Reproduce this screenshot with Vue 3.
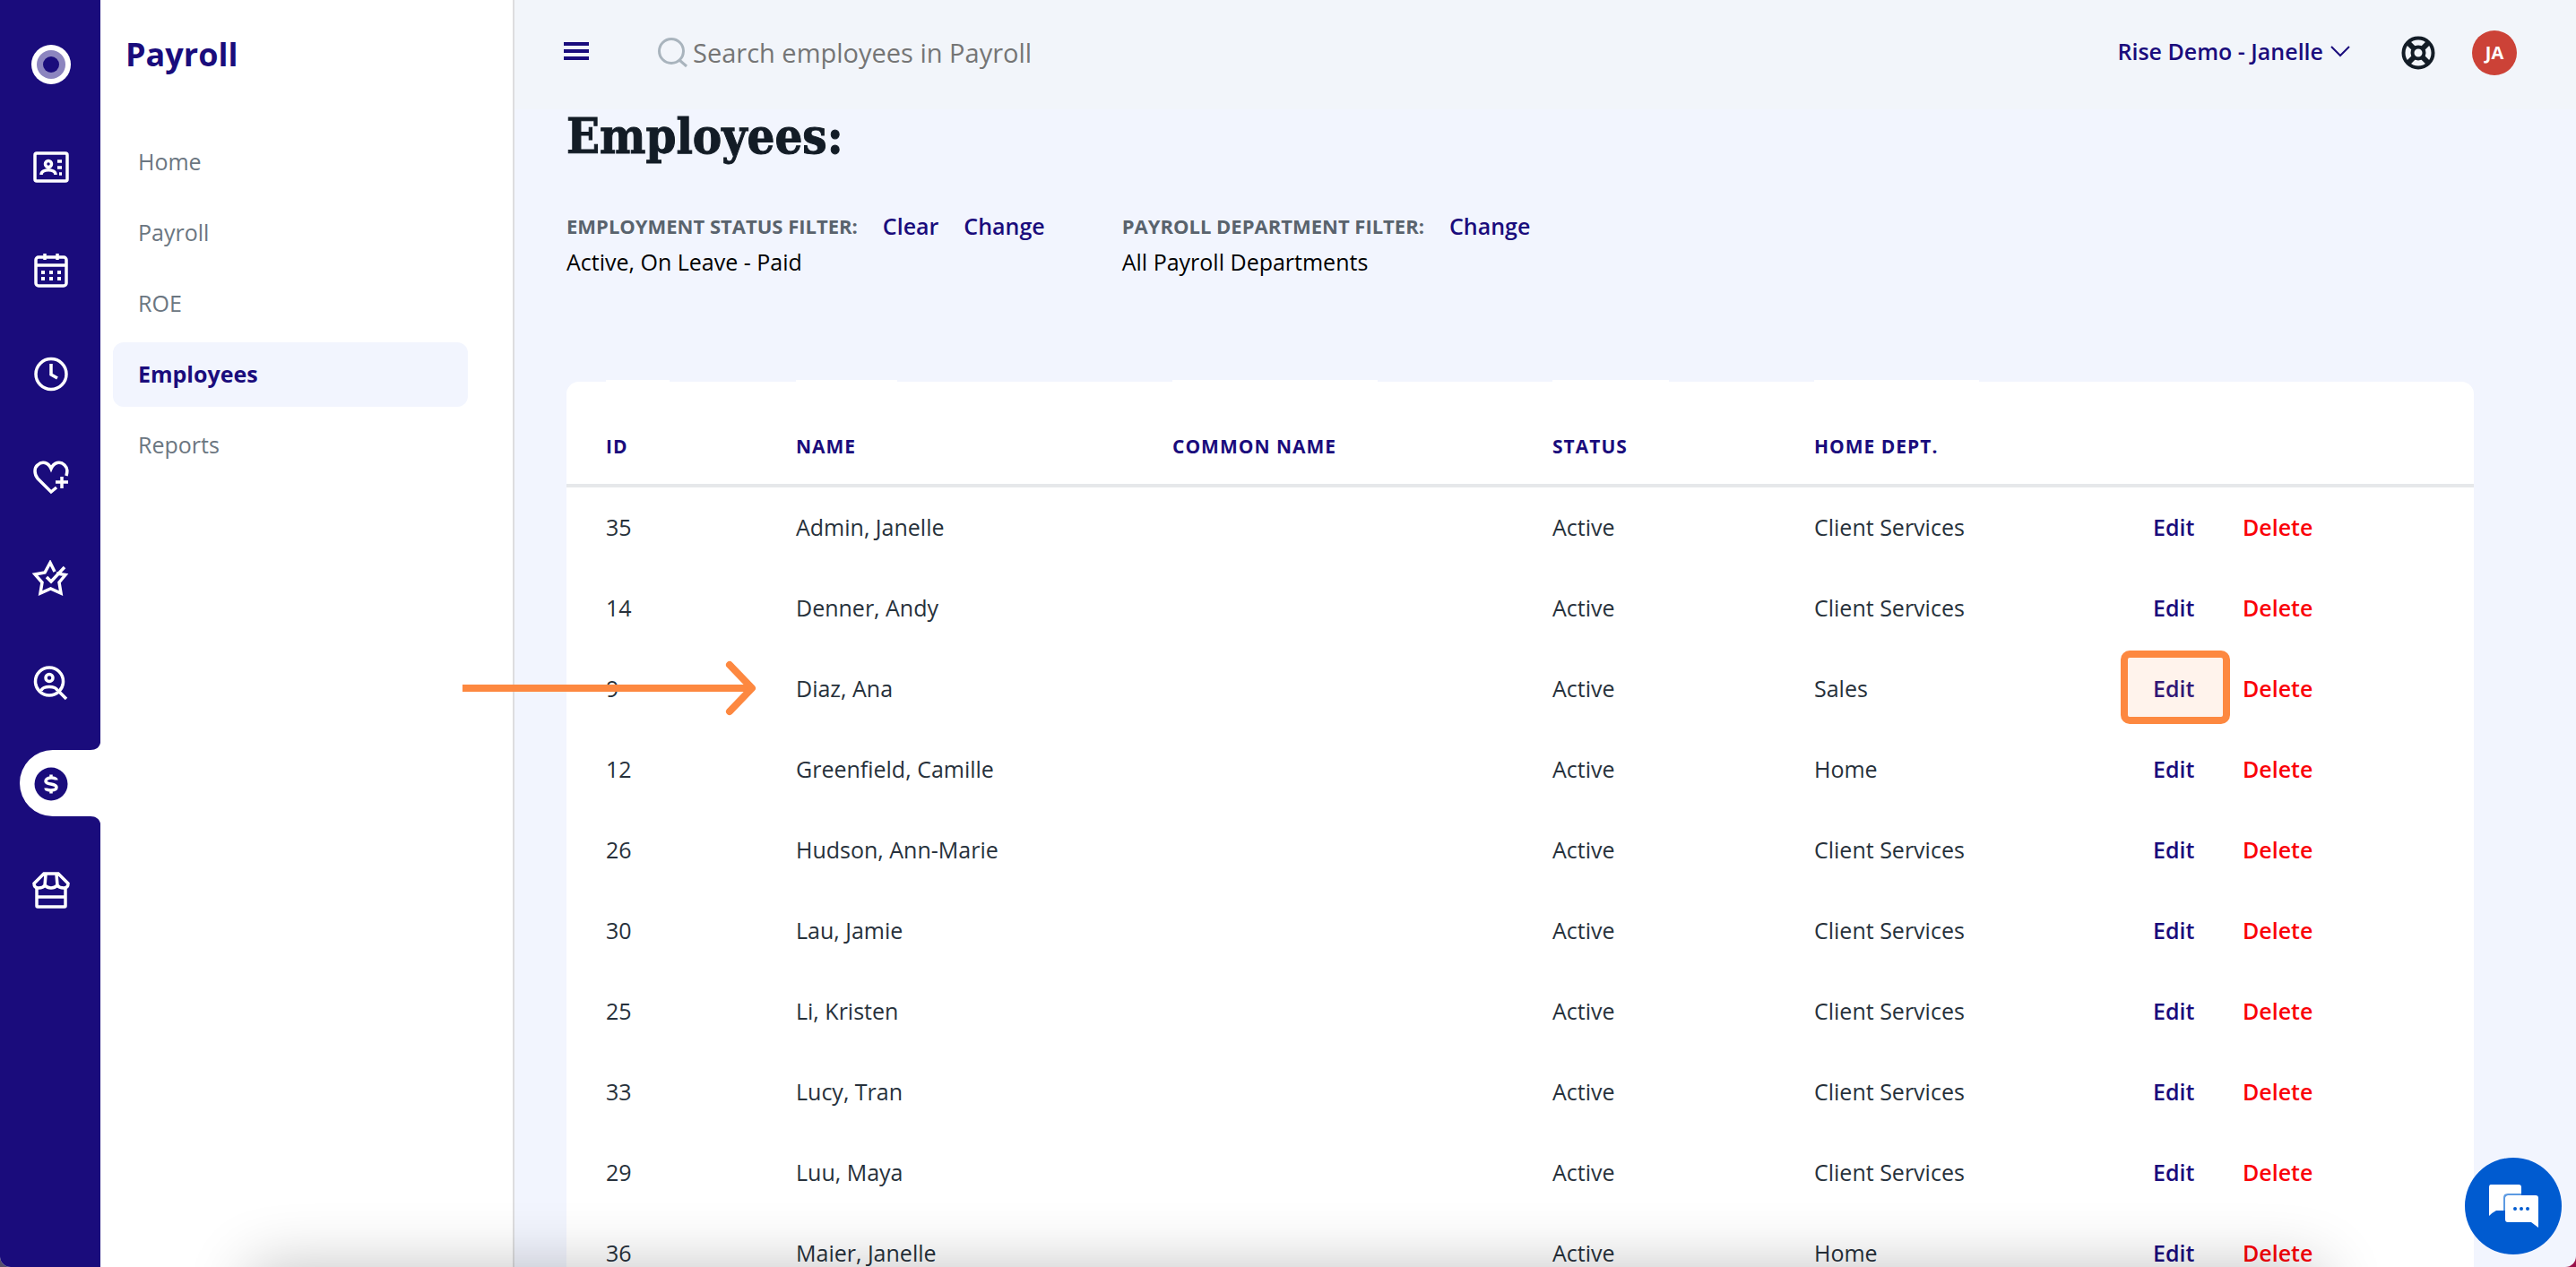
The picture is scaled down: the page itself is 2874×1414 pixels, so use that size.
<script setup>
import { ref } from 'vue'

const search = ref('')

const railItems = [
  { key: 'people', label: 'People' },
  { key: 'calendar', label: 'Calendar' },
  { key: 'time', label: 'Time' },
  { key: 'benefits', label: 'Benefits' },
  { key: 'performance', label: 'Performance' },
  { key: 'recruiting', label: 'Recruiting' },
  { key: 'payroll', label: 'Payroll', active: true },
  { key: 'store', label: 'Marketplace' },
]

const navItems = ['Home', 'Payroll', 'ROE', 'Employees', 'Reports']
const currentNav = 'Employees'

const columns = ['ID', 'Name', 'Common Name', 'Status', 'Home Dept.']

const employees = [
  { id: 35, name: 'Admin, Janelle', dept: 'Client Services' },
  { id: 14, name: 'Denner, Andy', dept: 'Client Services' },
  { id: 9, name: 'Diaz, Ana', dept: 'Sales', marked: true },
  { id: 12, name: 'Greenfield, Camille', dept: 'Home' },
  { id: 26, name: 'Hudson, Ann-Marie', dept: 'Client Services' },
  { id: 30, name: 'Lau, Jamie', dept: 'Client Services' },
  { id: 25, name: 'Li, Kristen', dept: 'Client Services' },
  { id: 33, name: 'Lucy, Tran', dept: 'Client Services' },
  { id: 29, name: 'Luu, Maya', dept: 'Client Services' },
  { id: 36, name: 'Maier, Janelle', dept: 'Home' },
]
</script>

<template>
  <div class="app">
    <nav class="rail" aria-label="Modules">
      <a class="brand" href="#" aria-label="Dashboard">
        <svg viewBox="0 0 44 44" width="44" height="44">
          <circle cx="22" cy="22" r="22" fill="#fff" />
          <circle cx="22" cy="22" r="16" fill="#8c85bf" />
          <circle cx="22" cy="22" r="9" fill="#1a0c7c" />
        </svg>
      </a>
      <a
        v-for="item in railItems"
        :key="item.key"
        class="rail-item"
        :class="{ active: item.active }"
        href="#"
        :aria-label="item.label"
      >
        <svg v-if="item.active" class="tab" viewBox="0 0 90 90" width="90" height="90">
          <path d="M90 0C89 5 85 8 79 8H37A37 37 0 0 0 37 82H79C85 82 89 85 90 90Z" fill="#fff" />
        </svg>
        <svg class="glyph" viewBox="0 0 44 44" width="44" height="44">
          <g v-if="item.key === 'people'">
            <rect x="4" y="6" width="36" height="31" rx="2" />
            <circle cx="19" cy="18" r="3.5" />
            <path d="M11 30C11 23 27 23 27 30M29 15h5M29 22h5M31 29h3" />
          </g>
          <g v-else-if="item.key === 'calendar'">
            <rect x="5" y="7" width="34" height="32" rx="3" />
            <path d="M5 16H39M15 3V10M29 3V10" />
            <path class="dots" d="M13 24h0M22 24h0M31 24h0M13 31h0M22 31h0M31 31h0" />
          </g>
          <g v-else-if="item.key === 'time'">
            <circle cx="22" cy="22.500" r="17" />
            <path d="M22 11V23L29 27" />
          </g>
          <g v-else-if="item.key === 'benefits'">
            <path d="M28 34L22 39L7 24C3 19 3 12 7 9C12 4 19 6 22 13C25 6 32 4 37 9C41 13 40 17 39 21" />
            <path d="M34 22V35M27 28H41" />
          </g>
          <g v-else-if="item.key === 'performance'">
            <path d="M28 15L38 16.500L31 25L33 37L21.500 32L10 37L12 25L4 16L15 14L21 3L26 13" />
            <path d="M17 19L22 24L37 8" />
          </g>
          <g v-else-if="item.key === 'recruiting'">
            <circle cx="20" cy="20.500" r="15.500" />
            <circle cx="20" cy="16.500" r="4" />
            <path d="M11 31C12 25 28 25 29 31M31 32L39 40" />
          </g>
          <g v-else-if="item.key === 'payroll'">
            <circle cx="22" cy="20" r="18.500" fill="#1a0c7c" stroke="none" />
            <path d="M28 15.500C28 12 16 12 16 17C16 21 28 19 28 23.500C28 28 16 28 16 24.500M22 9.500V13M22 27V30.500" />
          </g>
          <g v-else>
            <path d="M6 20V41Q6 42 7 42H37Q38 42 38 41V20M6 31H38" />
            <path d="M14 5H30L41 16Q41 21 36 21Q31 21 29 18Q26 21 22 21Q18 21 15 18Q13 21 8 21Q3 21 3 16ZM16 6L15 18M28 6L29 18" />
          </g>
        </svg>
      </a>
    </nav>

    <aside class="panel">
      <h2 class="panel-title">Payroll</h2>
      <nav class="panel-nav" aria-label="Payroll">
        <a
          v-for="item in navItems"
          :key="item"
          class="nav-link"
          :class="{ current: item === currentNav }"
          href="#"
          >{{ item }}</a
        >
      </nav>
    </aside>

    <div class="content">
      <header class="topbar">
        <button class="plain menu" type="button" aria-label="Toggle menu">
          <svg viewBox="0 0 28 22" width="28" height="22">
            <path d="M0 3H28M0 11H28M0 19H28" stroke="#1a0c7c" stroke-width="4" />
          </svg>
        </button>
        <label class="search">
          <svg viewBox="0 0 34 34" width="34" height="34" fill="none" stroke="#a9b4bd" stroke-width="3">
            <circle cx="16" cy="15" r="13.500" />
            <path d="M25 25L33 32" />
          </svg>
          <input v-model="search" type="text" placeholder="Search employees in Payroll" aria-label="Search employees in Payroll" />
        </label>
        <button class="plain company" type="button">
          Rise Demo - Janelle
          <svg viewBox="0 0 22 14" width="22" height="14" fill="none" stroke="#1a0c7c" stroke-width="2">
            <path d="M1 2L11 12L21 2" />
          </svg>
        </button>
        <button class="plain help" type="button" aria-label="Help">
          <svg viewBox="0 0 38 38" width="38" height="38" fill="none" stroke="#131c26" stroke-width="4">
            <circle cx="19" cy="19" r="16.500" />
            <circle cx="19" cy="19" r="6.500" />
            <path d="M7.500 7.500L14 14M30.500 7.500L24 14M7.500 30.500L14 24M30.500 30.500L24 24" stroke-width="6" />
          </svg>
        </button>
        <button class="plain avatar" type="button">JA</button>
      </header>

      <main class="main">
        <h1 class="heading">Employees:</h1>
        <div class="filters">
          <section class="filter">
            <div class="filter-head">
              <span class="filter-label">EMPLOYMENT STATUS FILTER:</span>
              <a href="#">Clear</a>
              <a href="#">Change</a>
            </div>
            <div class="filter-value">Active, On Leave - Paid</div>
          </section>
          <section class="filter">
            <div class="filter-head">
              <span class="filter-label">PAYROLL DEPARTMENT FILTER:</span>
              <a href="#">Change</a>
            </div>
            <div class="filter-value">All Payroll Departments</div>
          </section>
        </div>

        <div class="card">
          <table>
            <colgroup>
              <col class="c-id" />
              <col class="c-name" />
              <col class="c-common" />
              <col class="c-status" />
              <col class="c-dept" />
              <col class="c-edit" />
              <col class="c-delete" />
            </colgroup>
            <thead>
              <tr>
                <th v-for="column in columns" :key="column" scope="col">
                  <span class="th-label">{{ column }}</span>
                </th>
                <td></td>
                <td></td>
              </tr>
            </thead>
            <tbody>
              <tr v-for="person in employees" :key="person.id">
                <td class="anchor">
                  {{ person.id }}
                  <svg v-if="person.marked" class="arrow" viewBox="0 0 328 62" width="328" height="62" aria-hidden="true">
                    <path d="M0 31H320" />
                    <path d="M298 5L323 31L298 57" stroke-linecap="round" stroke-linejoin="round" />
                  </svg>
                </td>
                <td>{{ person.name }}</td>
                <td></td>
                <td>Active</td>
                <td>{{ person.dept }}</td>
                <td class="anchor">
                  <a class="edit" href="#">Edit</a>
                  <span v-if="person.marked" class="highlight"></span>
                </td>
                <td><a class="delete" href="#">Delete</a></td>
              </tr>
            </tbody>
          </table>
        </div>
      </main>
    </div>

    <div class="dock-shadow"></div>
    <button class="plain chat" type="button" aria-label="Open chat">
      <svg viewBox="0 0 56 50" width="56" height="50">
        <path d="M3 1H34Q37 1 37 4V12H22Q18 12 18 16V30H9Q5 32 1 36V4Q1 1 3 1Z" fill="#fff" />
        <path d="M22 13H53Q56 13 56 16V49L48 43H22Q19 43 19 40V16Q19 13 22 13Z" fill="#fff" />
        <path d="M18 30V16Q18 12 22 12H37" fill="none" stroke="#5c9ae2" stroke-width="2" />
        <path d="M30 28h0M37 28h0M44 28h0" stroke="#005bd0" stroke-width="4" stroke-linecap="round" />
      </svg>
    </button>
  </div>
</template>

<style>
html {
  background: linear-gradient(90deg, #55506a 50%, #99104a 50%);
}
body {
  margin: 0;
}
</style>

<style scoped>
* {
  box-sizing: border-box;
}
.app {
  display: flex;
  position: relative;
  height: 100vh;
  overflow: hidden;
  border-radius: 0 0 12px 12px;
  background: #f2f5fe;
  font-family: 'Open Sans', 'Noto Sans', sans-serif;
  font-size: 25px;
  line-height: 36px;
  color: #27313b;
}
a {
  color: #1a0c7c;
  font-weight: 600;
  text-decoration: none;
}
.plain {
  display: flex;
  align-items: center;
  justify-content: center;
  padding: 0;
  border: 0;
  background: none;
  font: inherit;
}
svg {
  display: block;
}

.rail {
  display: flex;
  flex: none;
  flex-direction: column;
  width: 112px;
  padding-top: 50px;
  background: #1a0c7c;
}
.brand {
  display: flex;
  justify-content: center;
  height: 79px;
  padding-left: 2px;
}
.rail-item {
  display: flex;
  position: relative;
  align-items: center;
  justify-content: center;
  height: 115px;
  padding-left: 2px;
}
.tab {
  position: absolute;
  top: 10px;
  right: 0;
}
.glyph {
  position: relative;
  fill: none;
  stroke: #fff;
  stroke-width: 3.5;
}
.dots {
  stroke-width: 4;
  stroke-linecap: square;
}

.panel {
  flex: none;
  width: 462px;
  padding: 36px 50px 0 14px;
  border-right: 2px solid #dddddf;
  background: #fff;
}
.panel-title {
  margin: 0 0 59px;
  padding-left: 14px;
  color: #1a0c7c;
  font-size: 36px;
  line-height: 50px;
}
.panel-nav {
  display: flex;
  flex-direction: column;
  gap: 7px;
}
.nav-link {
  padding: 17px 28px 19px;
  border-radius: 12px;
  color: #6b7681;
  font-weight: 400;
}
.nav-link.current {
  background: #f2f5fe;
  color: #1a0c7c;
  font-weight: 700;
}

.content {
  flex: 1;
  min-width: 0;
}
.topbar {
  display: flex;
  align-items: center;
  height: 122px;
  padding: 0 66px 4px 55px;
  background: #f2f5fa;
}
.menu,
.company {
  padding-bottom: 4px;
}
.search {
  display: flex;
  flex: 1;
  align-items: center;
  gap: 6px;
  margin-left: 76px;
}
.search input {
  flex: 1;
  padding: 0;
  border: 0;
  outline: 0;
  background: none;
  font: inherit;
  font-size: 29px;
  line-height: 40px;
}
.search input::placeholder {
  color: #757575;
  opacity: 1;
}
.company {
  gap: 8px;
  color: #1a0c7c;
  font-weight: 600;
}
.help {
  margin: 0 41px 0 57px;
}
.avatar {
  width: 50px;
  height: 50px;
  border-radius: 50%;
  background: #cc4237;
  color: #fff;
  font-size: 20px;
  font-weight: 700;
}

.main {
  padding: 0 114px 0 58px;
}
.heading {
  margin: 0;
  color: #131c26;
  font-family: 'DejaVu Serif Condensed', 'DejaVu Serif', serif;
  font-size: 54px;
  line-height: 60px;
  -webkit-text-stroke: 1px #131c26;
}
.filters {
  display: flex;
  gap: 86px;
  margin: 52px 0 116px;
}
.filter-head {
  display: flex;
  align-items: center;
  gap: 28px;
}
.filter-label {
  color: #59636d;
  font-size: 22px;
  font-weight: 700;
}
.filter-value {
  padding-top: 4px;
  color: #000;
}

.card {
  border-radius: 14px;
  background: #fff;
}
table {
  width: 100%;
  border-collapse: separate;
  border-spacing: 0;
  table-layout: fixed;
}
.c-id { width: 256px; }
.c-name { width: 420px; }
.c-common { width: 424px; }
.c-status { width: 292px; }
.c-dept { width: 378px; }
.c-edit { width: 100px; }
.c-delete { width: 258px; }
th,
td {
  height: 90px;
  padding: 0 0 2px;
  line-height: 28px;
  text-align: left;
}
th:first-child,
td:first-child {
  padding-left: 44px;
}
thead th,
thead td {
  height: 118px;
  padding-bottom: 0;
  border-bottom: 4px solid #e6e8ea;
}
.th-label {
  display: block;
  position: relative;
  width: fit-content;
  padding: 43px 46px 14px 0;
  color: #1a0c7c;
  font-size: 21px;
  letter-spacing: 1px;
  text-transform: uppercase;
}
.th-label::before {
  content: '';
  position: absolute;
  inset: -17px 0 auto;
  height: 20px;
  background: #fff;
}
.anchor {
  position: relative;
}
.delete {
  color: #fa0008;
}
.arrow {
  position: absolute;
  top: 13px;
  left: -116px;
  fill: none;
  stroke: #fd8840;
  stroke-width: 8;
}
.highlight {
  position: absolute;
  top: 2px;
  left: -36px;
  width: 122px;
  height: 82px;
  border: 8px solid #fd8840;
  border-radius: 10px;
  background: rgba(253, 136, 64, 0.1);
}

.dock-shadow {
  position: absolute;
  top: 100%;
  right: 284px;
  left: 280px;
  height: 200px;
  box-shadow: 0 0 70px rgba(0, 0, 0, 0.24);
}
.chat {
  position: absolute;
  right: 16px;
  bottom: 14px;
  width: 108px;
  height: 108px;
  border-radius: 50%;
  background: #005bd0;
}
</style>
